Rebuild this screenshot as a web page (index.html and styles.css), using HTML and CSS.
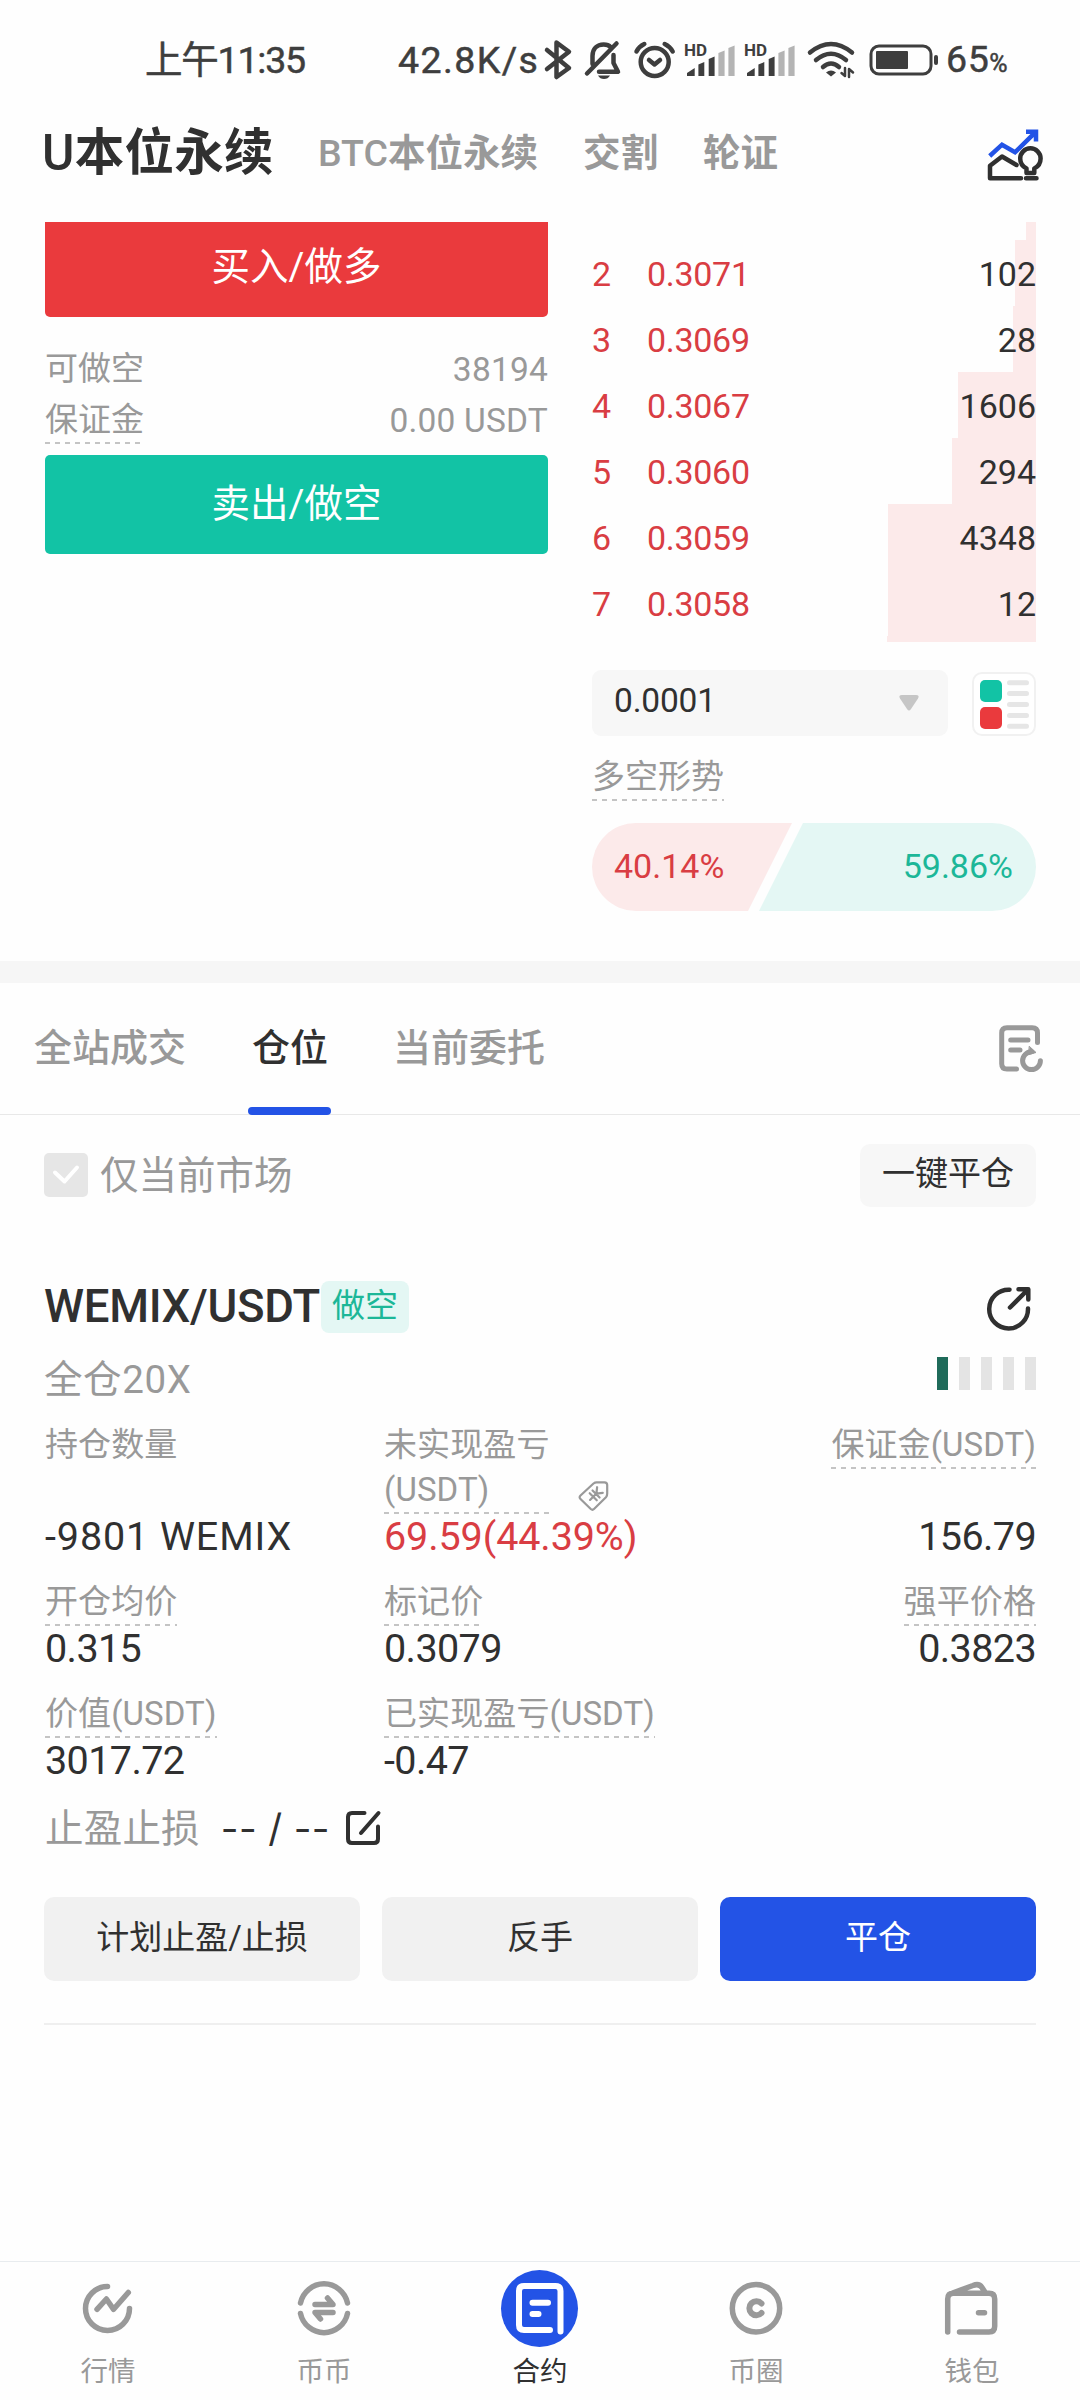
FILE: index.html
```html
<!DOCTYPE html>
<html lang="zh-CN">
<head>
<meta charset="utf-8">
<title>U本位永续</title>
<link rel="stylesheet" href="styles.css">
</head>
<body>
<div class="screen">

  <div class="status">
    <span class="status-time">上午11:35</span>
    <span class="status-speed">42.8K/s</span>
    <div class="status-icons">
      <svg class="ic-bt" width="30" height="42" viewBox="0 0 30 42"><path d="M4 11L26 29L13.5 38V3.5L26 12.7L4 30"/></svg>
      <svg class="ic-bell" width="40" height="42" viewBox="0 0 40 42"><path d="M4 34.5L33.5 4.5M9.5 25V17C9.5 10 14 5.5 20.7 5.5C24 5.5 26 6.3 27.5 8M30.5 16V24L35 32.7H16"/><path class="solid" d="M15 36.5H27Q25 40 21 40T15 36.5Z"/></svg>
      <svg class="ic-alarm" width="43" height="40" viewBox="0 0 43 40"><circle cx="21.7" cy="22" r="14"/><path d="M3.5 11.5Q6 6.500 11.300 4M31.700 4Q37 6.500 39.700 11.500M16 20L21.500 24.500L27 20"/></svg>
      <svg class="ic-sig" width="52" height="36" viewBox="0 0 52 36"><g class="solid"><path d="M2 34V31L9.700 26V34ZM13.400 34V22.500L19.300 20V34ZM23.700 34V17L29.600 14.500V34Z"/></g><g class="faint"><path d="M33.400 34V11L39.600 8.500V34ZM43.400 34V6L49.600 3.500V34Z"/></g><text x="-1" y="14">HD</text></svg>
      <svg class="ic-sig" width="52" height="36" viewBox="0 0 52 36"><g class="solid"><path d="M2 34V31L9.700 26V34ZM13.400 34V22.500L19.300 20V34ZM23.700 34V17L29.600 14.500V34Z"/></g><g class="faint"><path d="M33.400 34V11L39.600 8.500V34ZM43.400 34V6L49.600 3.500V34Z"/></g><text x="-1" y="14">HD</text></svg>
      <svg class="ic-wifi" width="52" height="40" viewBox="0 0 52 40"><path d="M5 12.500Q26 -4.500 47 12.500M11 20Q26 7.500 41 20M18 27Q26 20 34 27"/><path class="solid" d="M26 36.500L21 32.500Q26 28.500 31 32.500Z"/><path class="thin" d="M40 28V36L36.500 33M44 37V29L48 32.500"/></svg>
      <svg class="ic-bat" width="72" height="32" viewBox="0 0 72 32"><rect class="line" x="2" y="2" width="60" height="28" rx="8"/><rect class="solid" x="7" y="7" width="32" height="18" rx="1"/><rect class="solid" x="65" y="11" width="4" height="10" rx="2"/></svg>
    </div>
    <span class="status-bat">65<small>%</small></span>
  </div>

  <header class="header">
    <nav class="market-tabs">
      <span class="market-tab is-active"><i>U</i>本位永续</span>
      <span class="market-tab"><i>BTC</i>本位永续</span>
      <span class="market-tab">交割</span>
      <span class="market-tab">轮证</span>
    </nav>
    <svg class="ic-trend" width="60" height="56" viewBox="0 0 60 56"><path class="blue" d="M4.700 29L17 17.700L30 25.300L51 4.700M41 4.700H51V14.500"/><path d="M31.500 38L17 29.500L5 38.700V51.300H36M41.500 46V41.500C37.500 39.500 35.200 36 35.200 31.500a10.200 10.200 0 0 1 20.400 0c0 4.500-2.300 8-6.300 10v4.500zM41 51.300H51.500"/></svg>
  </header>

  <main>
    <section class="trade">
      <div class="order-form">
        <button class="btn-trade buy">买入/做多</button>
        <div class="info-rows">
          <div class="info-row"><span>可做空</span><span class="amount">38194</span></div>
          <div class="info-row"><span class="dash">保证金</span><span class="amount">0.00 USDT</span></div>
        </div>
        <button class="btn-trade sell">卖出/做空</button>
      </div>

      <div class="book">
        <div class="asks">
          <div class="ask" style="--depth:10px"></div>
          <div class="ask" style="--depth:21px"><b>2</b><span>0.3071</span><em>102</em></div>
          <div class="ask" style="--depth:23px"><b>3</b><span>0.3069</span><em>28</em></div>
          <div class="ask" style="--depth:78px"><b>4</b><span>0.3067</span><em>1606</em></div>
          <div class="ask" style="--depth:84px"><b>5</b><span>0.3060</span><em>294</em></div>
          <div class="ask" style="--depth:148px"><b>6</b><span>0.3059</span><em>4348</em></div>
          <div class="ask" style="--depth:148px"><b>7</b><span>0.3058</span><em>12</em></div>
          <div class="ask" style="--depth:149px"></div>
        </div>
        <div class="book-tools">
          <div class="select"><span>0.0001</span><svg width="20" height="16" viewBox="0 0 20 16"><path d="M3 0H17Q21 0 19 3.500L12 14Q10 17 8 14L1 3.500Q-1 0 3 0Z"/></svg></div>
          <svg class="ic-mode" width="64" height="64" viewBox="0 0 64 64"><rect class="frame" x="1" y="1" width="62" height="62" rx="9"/><rect x="8" y="8" width="22" height="22" rx="5" fill="#12c3a5"/><rect x="8" y="35" width="22" height="22" rx="5" fill="#ea3a3d"/><path d="M37.500 10.700H54.500M37.500 21.500H54.500M37.500 32.500H54.500M37.500 43.500H54.500M37.500 54.300H54.500"/></svg>
        </div>
        <div class="sentiment-title"><span class="dash">多空形势</span></div>
        <div class="sentiment">
          <div class="long">40.14%</div>
          <div class="short">59.86%</div>
        </div>
      </div>
    </section>

    <div class="band"></div>

    <nav class="tabs">
      <span class="tab">全站成交</span>
      <span class="tab is-active">仓位</span>
      <span class="tab">当前委托</span>
      <svg class="ic-history" width="52" height="54" viewBox="0 0 52 54"><path d="M42.500 21.500V12q0-5.300-5.300-5.300H12q-5.300 0-5.300 5.300V42.700q0 5.300 5.300 5.300H21.500M15.700 19H33M15.700 29H25M45.400 39.700a8.900 8.900 0 1 1-8.900-8.900"/><path class="tip" d="M34.500 25.500L41 31.500L34 33.500Z"/></svg>
    </nav>

    <section class="positions">
      <div class="filter">
        <span class="check"><svg width="44" height="44" viewBox="0 0 44 44"><path d="M11 19.500L20.500 28.500L33 14.500"/></svg></span>
        <span class="filter-label">仅当前市场</span>
        <button class="btn-close-all">一键平仓</button>
      </div>

      <div class="pos-head">
        <span class="symbol">WEMIX/USDT</span>
        <span class="badge">做空</span>
        <svg class="ic-share" width="52" height="50" viewBox="0 0 52 50"><path d="M45 25.500A19.400 19.400 0 1 1 26.500 6.700M27 24.500L45 6.500M35.500 6.200H45.300V16.500"/></svg>
      </div>
      <div class="pos-sub">
        <span>全仓20X</span>
        <div class="risk"><i class="on"></i><i></i><i></i><i></i><i></i></div>
      </div>

      <div class="stats">
        <div class="stat"><label>持仓数量</label><strong>-9801 WEMIX</strong></div>
        <div class="stat">
          <div class="label-line"><label class="dash wrap">未实现盈亏<br>(USDT)</label>
          <svg class="ic-tag" width="36" height="35" viewBox="0 0 36 35"><path d="M4.500 17.500L17.500 5.500q1.500-1.200 3-1.200h8q2.700 0 2.700 2.700v8.500q0 2-1 3.500L18 31q-1.500 1.500-3.200 0L4.500 21q-1.800-1.700 0-3.500z"/><g transform="translate(19 17) rotate(45)"><path d="M-4-7L0-2L4-7M0-2V7M-5-1.500H5M-5 2.500H5"/></g></svg></div>
          <strong class="up">69.59(44.39%)</strong>
        </div>
        <div class="stat end"><label class="dash">保证金(USDT)</label><strong class="narrow">156.79</strong></div>
        <div class="stat"><label class="dash">开仓均价</label><strong class="narrow">0.315</strong></div>
        <div class="stat"><label class="dash">标记价</label><strong class="narrow">0.3079</strong></div>
        <div class="stat end"><label class="dash">强平价格</label><strong class="narrow">0.3823</strong></div>
        <div class="stat"><label class="dash">价值(USDT)</label><strong class="narrow">3017.72</strong></div>
        <div class="stat"><label class="dash">已实现盈亏(USDT)</label><strong class="narrow">-0.47</strong></div>
      </div>

      <div class="tpsl">
        <span class="tpsl-label">止盈止损</span>
        <span class="tpsl-value">-- / --</span>
        <svg class="ic-edit" width="40" height="40" viewBox="0 0 40 40"><path d="M21.500 5H9q-4 0-4 4v22q0 4 4 4h22q4 0 4-4V18.500M18 25L35.500 5"/></svg>
      </div>

      <div class="actions">
        <button class="btn">计划止盈/止损</button>
        <button class="btn">反手</button>
        <button class="btn primary">平仓</button>
      </div>
    </section>
  </main>

  <footer class="bottom-nav">
    <a class="nav-item"><svg width="56" height="56" viewBox="0 0 56 56"><path d="M49.500 28.500A22 22 0 1 1 27.500 6.500M17 29.300L26.400 19L33.600 29.300L48.300 12.500"/></svg><span>行情</span></a>
    <a class="nav-item"><svg width="56" height="56" viewBox="0 0 56 56"><path d="M4.500 23A24 24 0 0 1 51.500 23M4.500 33.500A24 24 0 0 0 51.500 33.500M19 24.500H37L31.500 18M37 32.500H19L24.500 39"/></svg><span>币币</span></a>
    <a class="nav-item is-active"><svg width="77" height="77" viewBox="0 0 77 77"><circle cx="38.500" cy="38.500" r="38.500"/><path d="M49 60H23q-5 0-5-5V21q0-5 5-5H54.500q5 0 5 5V61.500M31.500 32.700H47M31.500 44H37.500"/></svg><span>合约</span></a>
    <a class="nav-item"><svg width="56" height="56" viewBox="0 0 56 56"><circle cx="28" cy="28.300" r="23.700"/><path class="heavy" d="M33.500 23.500A7 7 0 1 0 33.500 33"/></svg><span>币圈</span></a>
    <a class="nav-item"><svg width="56" height="56" viewBox="0 0 56 56"><path d="M3.700 52V19q0-5.700 5.700-5.700H45q5.700 0 5.700 5.700V46.300q0 5.700-5.700 5.700H15.500M8.600 13L29 5.500q6-2.500 9 2l3.500 5.500M34.500 32.700H40.500"/></svg><span>钱包</span></a>
  </footer>
</div>
</body>
</html>
```
FILE: styles.css
```css
* { box-sizing: border-box; }

body {
  margin: 0;
  background: #fefefe;
  color: #303030;
  font-family: Roboto, "Noto Sans CJK SC", sans-serif;
  font-size: 33px;
  line-height: 45px;
}

button {
  border: 0;
  padding: 0;
  font: inherit;
  color: inherit;
  white-space: nowrap;
}

svg {
  display: block;
  flex: none;
  fill: none;
  stroke: currentColor;
  stroke-linecap: round;
  stroke-linejoin: round;
  overflow: visible;
}

i, em, b { font-style: normal; font-weight: inherit; }

.screen {
  width: 1080px;
  height: 2400px;
  display: flex;
  flex-direction: column;
  overflow: hidden;
}

/* underline made of short dashes, sits below the text */
.dash {
  padding-bottom: 2px;
  background: repeating-linear-gradient(90deg, #c4c4c4 0 5px, transparent 5px 10px) left bottom / 100% 2px no-repeat;
}

/* status bar */
.status {
  height: 120px;
  display: flex;
  align-items: center;
  padding-left: 145px;
  color: #3e3e3e;
  font-size: 37.500px;
  white-space: nowrap;
  -webkit-text-stroke: .5px;
}
.status-time { width: 253px; padding-top: 1px; letter-spacing: -1.200px; }
.status-speed { width: 145px; padding-top: 1px; letter-spacing: 1.400px; }
.status-icons { display: flex; align-items: center; width: 403px; height: 42px; }
.status-icons svg { stroke-width: 4.5; }
.status-icons .solid { fill: currentColor; stroke: none; }
.status-icons .faint { fill: #b4b4b4; stroke: none; }
.status-icons .thin { stroke-width: 2.5; }
.status-icons .line { stroke-width: 3; }
.status-icons text { fill: currentColor; stroke: none; font-size: 17px; font-weight: 700; }
.ic-bt { margin-right: 10px; }
.ic-bell { margin-right: 10px; }
.ic-alarm { margin-right: 9px; }
.ic-sig { margin-right: 8px; }
.ic-wifi { margin-right: 12px; }
.status-bat { padding-top: 3px; letter-spacing: .6px; }
.status-bat small { font-size: 25px; margin-left: 0; }

/* market header */
.header {
  height: 102px;
  display: flex;
  align-items: flex-start;
  justify-content: space-between;
  padding: 7px 35px 0 42px;
}
.market-tabs { display: flex; align-items: center; height: 53px; white-space: nowrap; }
.market-tab { color: #999; font-size: 37.500px; font-weight: 700; margin-right: 45px; }
.market-tab i { font-weight: 500; }
.market-tab.is-active { color: #303030; font-size: 49.500px; margin-right: 44px; letter-spacing: .3px; }
.ic-trend { stroke-width: 4.500; }
.ic-trend .blue { stroke: #2353e6; stroke-linecap: butt; stroke-linejoin: miter; }

/* order form and order book */
.trade {
  height: 739px;
  display: flex;
  justify-content: space-between;
  padding: 0 44px 0 45px;
  overflow: hidden;
}
.order-form { width: 503px; display: flex; flex-direction: column; }
.btn-trade {
  height: 99px;
  flex: none;
  border-radius: 5px;
  color: #fff;
  font-size: 38.500px;
  padding-bottom: 3px;
}
.buy { background: #ea3a3d; margin-top: -4px; }
.sell { background: #12c3a5; }
.info-rows { height: 138px; padding-top: 29px; color: #999; }
.info-row { display: flex; justify-content: space-between; height: 51px; align-items: flex-start; }
.amount { font-size: 33.500px; padding-top: 1px; letter-spacing: .2px; }

.book { width: 444px; }
.asks { height: 420px; overflow: hidden; font-size: 34px; }
.ask {
  height: 66px;
  display: flex;
  align-items: center;
  padding-top: 2px;
  background: linear-gradient(#fceaea, #fceaea) right top / var(--depth) 100% no-repeat;
  color: #d93d43;
}
.ask:first-child { margin-top: -48px; }
.ask b { width: 55px; }
.ask span { letter-spacing: -.3px; }
.ask em { margin-left: auto; color: #303030; }

.book-tools { display: flex; justify-content: space-between; margin-top: 28px; align-items: flex-end; }
.select {
  width: 356px;
  height: 66px;
  display: flex;
  justify-content: space-between;
  align-items: center;
  padding: 0 29px 0 22px;
  border-radius: 9px;
  background: #f7f7f7;
}
.select span { padding-bottom: 5px; font-size: 33.500px; letter-spacing: -.2px; }
.select svg { fill: #c6c6c6; stroke: none; }
.ic-mode { stroke: #e6e6e6; stroke-width: 5; }
.ic-mode rect { stroke: none; }
.ic-mode .frame { stroke: #f1f1f1; stroke-width: 2; fill: #fff; }

.sentiment-title { display: flex; margin-top: 18px; color: #999; }
.sentiment {
  display: flex;
  height: 88px;
  margin-top: 22px;
  border-radius: 44px;
  overflow: hidden;
  font-size: 34px;
  line-height: 86px;
}
.long { width: 200px; padding-left: 22px; background: #fceaea; color: #d93d43; clip-path: polygon(0 0, 100% 0, 156px 100%, 0 100%); }
.short { flex: 1; margin-left: -33px; padding-right: 23px; text-align: right; background: #e4f7f4; color: #1cb798; clip-path: polygon(44px 0, 100% 0, 100% 100%, 0 100%); }

.band { height: 22px; background: #f6f6f6; }

/* position tabs */
.tabs {
  height: 132px;
  display: flex;
  padding: 0 33px 0 34px;
  border-bottom: 1px solid #e8e8e8;
  color: #999;
  font-size: 38px;
  font-weight: 500;
}
.tab { height: 132px; line-height: 130px; white-space: nowrap; border-bottom: 8px solid transparent; }
.tab.is-active { position: relative; margin: 0 65px 0 66px; color: #303030; }
.tab.is-active::after {
  content: "";
  position: absolute;
  left: -4px;
  right: -3px;
  bottom: -8px;
  height: 8px;
  border-radius: 4px;
  background: #2353e6;
}
.ic-history { margin: 38px 0 0 auto; stroke-width: 5; }
.ic-history .tip { fill: currentColor; stroke-width: 1; }

/* open position */
.positions { margin: 0 44px; height: 911px; }
.positions { height: 882px; border-bottom: 2px solid #efefef; }
.filter { display: flex; align-items: center; height: 64px; margin-top: 28px; }
.check { width: 44px; height: 44px; border-radius: 5px; background: #e6e6e6; color: #fff; }
.check svg { stroke-width: 4; }
.filter-label { margin-left: 12px; color: #999; font-size: 38.500px; }
.btn-close-all { margin-left: auto; width: 176px; height: 63px; padding-bottom: 3px; border-radius: 10px; background: #f7f7f7; }

.pos-head { display: flex; align-items: center; height: 52px; margin-top: 74px; }
.symbol { font-size: 45.500px; font-weight: 500; width: 277px; padding-bottom: 2px; white-space: nowrap; letter-spacing: -.3px; }
.badge { width: 88px; height: 52px; line-height: 50px; text-align: center; border-radius: 8px; background: #e4f7f4; color: #1cb798; }
.ic-share { margin: 2px 1px 0 auto; stroke-width: 4.500; }

.pos-sub { display: flex; justify-content: space-between; height: 46px; margin-top: 23px; color: #999; font-size: 38.500px; }
.pos-sub span { padding-top: 1px; letter-spacing: .6px; }
.risk { display: flex; gap: 11px; margin-top: 1px; }
.risk i { width: 11px; height: 33px; background: #e4e4e4; }
.risk .on { background: #1f6b5a; }

.stats { display: grid; grid-template-columns: 339px 339px 1fr; row-gap: 19px; margin-top: 20px; padding-left: 1px; }
.stat { display: flex; flex-direction: column; align-items: flex-start; justify-content: space-between; white-space: nowrap; }
.stat.end { align-items: flex-end; }
.stat label { color: #999; letter-spacing: .1px; }
.label-line { display: flex; align-items: flex-end; }
.label-line .wrap { width: 165px; }
.ic-tag { margin: 0 0 1px 27px; color: #999; stroke-width: 2.200; }
.stat strong { font-size: 39.500px; font-weight: 400; line-height: 46px; letter-spacing: .9px; }
.stat .up { color: #d93d43; letter-spacing: -.1px; }
.stat .narrow { font-size: 39.500px; letter-spacing: -.6px; }

.tpsl { display: flex; align-items: center; height: 46px; margin-top: 21px; font-size: 38.500px; color: #999; }
.tpsl-label { margin-left: 1px; letter-spacing: .2px; }
.tpsl-value { margin-left: 21px; width: 122px; color: #303030; font-family: Inter, sans-serif; letter-spacing: .4px; white-space: pre; }
.ic-edit { color: #303030; stroke-width: 4; }

.actions { display: flex; gap: 22px; margin-top: 46px; }
.btn { flex: 1; height: 84px; padding-bottom: 4px; border-radius: 10px; background: #f1f1f1; }
.btn.primary { background: #2353e6; color: #fff; }

/* bottom navigation */
.bottom-nav {
  height: 139px;
  margin-top: auto;
  display: flex;
  border-top: 1px solid #e8ecef;
  color: #999;
  font-size: 27.500px;
  line-height: 34px;
}
.nav-item { flex: 1; display: flex; flex-direction: column; align-items: center; }
.nav-item svg { margin-top: 18px; stroke-width: 5.500; }
.nav-item span { margin-top: 19px; }
.nav-item .heavy { stroke-width: 6; }
.nav-item.is-active { color: #303030; }
.nav-item.is-active svg { margin: 8px 1px 0 0; color: #fff; stroke-width: 6; }
.nav-item.is-active circle { fill: #2353e6; stroke: none; }
.nav-item.is-active span { margin-top: 8px; }
```
